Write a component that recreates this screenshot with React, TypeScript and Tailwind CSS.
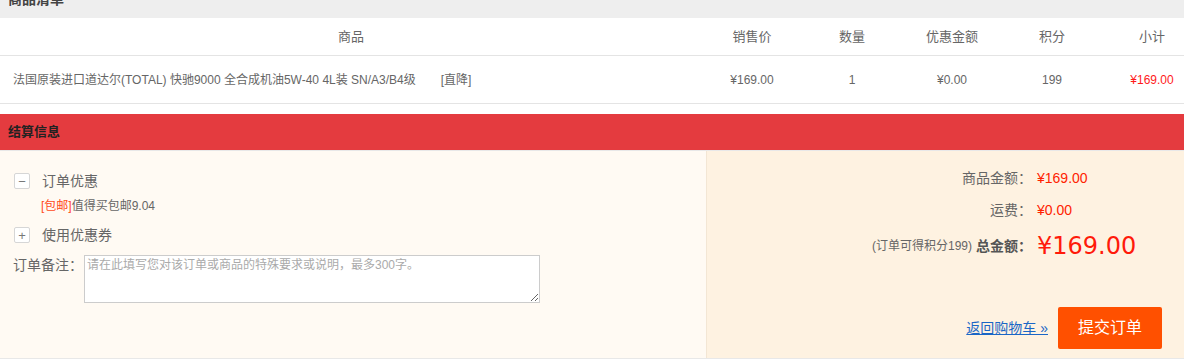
import React from 'react';

const font = 'font-["Liberation_Sans","Noto_Sans_CJK_SC",sans-serif]';

const columns = ['商品', '销售价', '数量', '优惠金额', '积分', '小计'];

const ToggleBox: React.FC<{ sign: '−' | '+' }> = ({ sign }) => (
  <span className="w-4 h-4 rounded-[2px] border border-[#d6d6d6] bg-white flex items-center justify-center text-[13px] leading-none text-[#777]">
    {sign}
  </span>
);

export default function App() {
  return (
    <div className={`w-[1184px] h-[361px] bg-white overflow-hidden text-[#666] ${font}`}>
      {/* Goods list title (scrolled off the top) */}
      <div className="h-[18px] bg-[#eeeeee] overflow-hidden px-2">
        <div className="-mt-[8px] leading-[14px] text-[14px] font-bold text-[#444]">商品清单</div>
      </div>

      {/* Table header */}
      <div className="grid grid-cols-[702px_100px_100px_100px_100px_100px] h-[38px] items-center border-b border-[#e4e4e4] text-[13px]">
        {columns.map((c) => (
          <div key={c} className="text-center">
            {c}
          </div>
        ))}
      </div>

      {/* Item row */}
      <div className="grid grid-cols-[702px_100px_100px_100px_100px_100px] h-[48px] items-center border-b border-[#e4e4e4] text-[12px]">
        <div className="pl-[13px] whitespace-nowrap">
          <span>法国原装进口道达尔(TOTAL) 快驰9000 全合成机油5W-40 4L装 SN/A3/B4级</span>
          <span className="ml-[25px]">[直降]</span>
        </div>
        <div className="text-center">¥169.00</div>
        <div className="text-center">1</div>
        <div className="text-center">¥0.00</div>
        <div className="text-center">199</div>
        <div className="text-center text-[#ff1a1a]">¥169.00</div>
      </div>

      <div className="h-[10px]" />

      {/* Settlement title */}
      <div className="h-[37px] bg-[#e43b3f] border-b border-[#e8e8e8] flex items-center px-2 text-[13px] font-bold text-[#222]">
        结算信息
      </div>

      {/* Settlement body */}
      <div className="flex h-[208px] border-b border-[#e8e8e8]">
        {/* Left: discounts and remark */}
        <div className="w-[707px] bg-[#fffaf3] border-r border-[#f3e6d4] pt-[22px] pl-[14px]">
          <div className="flex items-center h-4 gap-3 text-[14px]">
            <ToggleBox sign="−" />
            <span>订单优惠</span>
          </div>
          <div className="pl-[27px] mt-[10px] text-[12px] leading-[14px]">
            <span className="text-[#ff4a1a]">[包邮]</span>
            <span>值得买包邮9.04</span>
          </div>
          <div className="flex items-center h-4 gap-3 mt-[14px] text-[14px]">
            <ToggleBox sign="+" />
            <span>使用优惠券</span>
          </div>
          <div className="flex items-start mt-[12px] -ml-px">
            <span className="text-[14px] leading-[20px] w-[71px] shrink-0">订单备注：</span>
            <textarea
              className={`w-[456px] h-[48px] border border-[#cccccc] bg-white text-[12px] leading-[16px] px-[2px] py-[1px] placeholder:text-[#aaa] outline-none ${font}`}
              placeholder="请在此填写您对该订单或商品的特殊要求或说明，最多300字。"
            />
          </div>
        </div>

        {/* Right: totals and submit */}
        <div className="flex-1 bg-[#fef2e1] flex flex-col pt-[18px]">
          <div className="flex justify-end items-center h-[18px] text-[14px]">
            <span className="text-right mr-[5px]">商品金额：</span>
            <span className="w-[147px] text-[#ff2200]">¥169.00</span>
          </div>
          <div className="flex justify-end items-center h-[18px] mt-[14px] text-[14px]">
            <span className="text-right mr-[5px]">运费：</span>
            <span className="w-[147px] text-[#ff2200]">¥0.00</span>
          </div>
          <div className="flex justify-end items-center h-[30px] mt-[12px]">
            <span className="text-[12px]">(订单可得积分199)</span>
            <span className="text-[14px] font-bold text-[#555] ml-1 mr-[5px]">总金额：</span>
            <span className='w-[147px] text-[24px] leading-[30px] text-[#ff1a0a] font-["DejaVu_Sans",sans-serif]'>
              ¥169.00
            </span>
          </div>
          <div className="flex justify-end items-center mt-auto mb-[9px] pr-[22px] gap-[10px]">
            <a href="#" className="text-[14px] text-[#1a66c6] underline">
              返回购物车 »
            </a>
            <button className="w-[104px] h-[42px] rounded-[2px] bg-[#ff5000] text-white text-[16px]">
              提交订单
            </button>
          </div>
        </div>
      </div>
    </div>
  );
}
